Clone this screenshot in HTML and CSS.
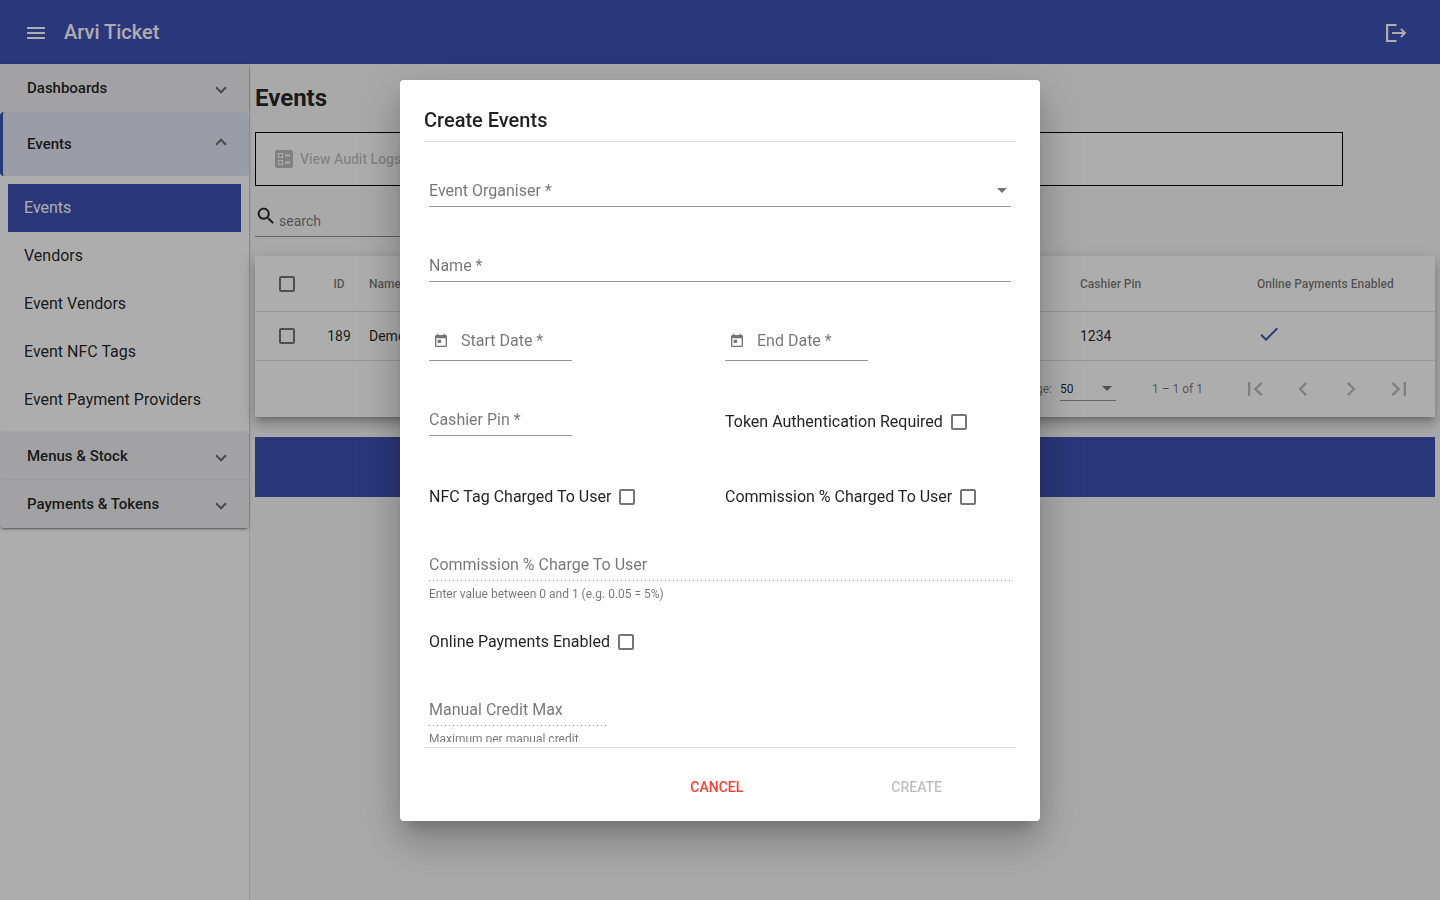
FILE: index.html
```
<!DOCTYPE html>
<html lang="en">
<head>
    <meta charset="UTF-8">
    <meta name="viewport" content="width=device-width, initial-scale=1">
    <title>Arvi Ticket</title>
    <link rel="stylesheet" href="styles.css">
</head>
<body>
    <header class="toolbar">
        <button class="icon-btn" aria-label="Menu">
            <svg viewBox="0 0 24 24"><path d="M3 18h18v-2H3v2zm0-5h18v-2H3v2zm0-7v2h18V6H3z"/></svg>
        </button>
        <span class="toolbar-title">Arvi Ticket</span>
        <button class="icon-btn" aria-label="Log out">
            <svg viewBox="0 0 24 24"><path d="M12.500 3v2H4.200v14h8.300v2H2V3zM17.600 7.200L22.400 12l-4.800 4.800-1.400-1.400L18.600 13H8v-2h10.600l-2.400-2.400z"/></svg>
        </button>
    </header>

    <div class="layout">
        <nav class="sidenav">
            <div class="accordion">
                <button class="panel-header">Dashboards</button>
                <button class="panel-header expanded">Events</button>
                <div class="panel-body">
                    <a href="#" class="nav-item active">Events</a>
                    <a href="#" class="nav-item">Vendors</a>
                    <a href="#" class="nav-item">Event Vendors</a>
                    <a href="#" class="nav-item">Event NFC Tags</a>
                    <a href="#" class="nav-item">Event Payment Providers</a>
                </div>
                <button class="panel-header">Menus &amp; Stock</button>
                <button class="panel-header">Payments &amp; Tokens</button>
            </div>
        </nav>

        <main class="content">
            <h1>Events</h1>
            <div class="action-bar">
                <button class="audit-btn" disabled>
                    <svg viewBox="0 0 24 24"><path d="M13 9.500h5v-2h-5v2zm0 7h5v-2h-5v2zm6 4.500H5c-1.100 0-2-.9-2-2V5c0-1.100.9-2 2-2h14c1.100 0 2 .9 2 2v14c0 1.100-.9 2-2 2zM6 11h5V6H6v5zm1-4h3v3H7V7zM6 18h5v-5H6v5zm1-4h3v3H7v-3z"/></svg>
                    View Audit Logs
                </button>
            </div>
            <div class="search">
                <svg viewBox="0 0 24 24"><path d="M15.500 14h-.79l-.28-.27C15.410 12.590 16 11.110 16 9.500 16 5.910 13.090 3 9.500 3S3 5.910 3 9.500 5.910 16 9.500 16c1.610 0 3.090-.59 4.230-1.570l.27.28v.79l5 4.990L20.490 19l-4.990-5zm-6 0C7.010 14 5 11.990 5 9.500S7.010 5 9.500 5 14 7.010 14 9.500 11.990 14 9.500 14z"/></svg>
                <input type="text" placeholder="search" aria-label="search">
            </div>

            <div class="table-card">
                <table>
                    <thead>
                        <tr>
                            <th class="col-check"><input type="checkbox" aria-label="Select all"></th>
                            <th class="col-id">ID</th>
                            <th>Name</th>
                            <th class="col-pin">Cashier Pin</th>
                            <th class="col-online">Online Payments Enabled</th>
                        </tr>
                    </thead>
                    <tbody>
                        <tr>
                            <td class="col-check"><input type="checkbox" aria-label="Select 189"></td>
                            <td class="col-id">189</td>
                            <td>Demo</td>
                            <td>1234</td>
                            <td><svg class="tick" viewBox="0 0 24 24"><path d="M9 16.170L4.830 12l-1.420 1.410L9 19 21 7l-1.410-1.410z"/></svg></td>
                        </tr>
                    </tbody>
                </table>
                <div class="paginator">
                    <label for="page-size">Items per page:</label>
                    <div class="select-wrap page-size">
                        <select id="page-size"><option>50</option></select>
                    </div>
                    <span class="range">1 – 1 of 1</span>
                    <button class="page-btn" aria-label="First page" disabled><svg viewBox="0 0 24 24"><path d="M18.410 16.590L13.820 12l4.590-4.590L17 6l-6 6 6 6zM6 6h2v12H6z"/></svg></button>
                    <button class="page-btn" aria-label="Previous page" disabled><svg viewBox="0 0 24 24"><path d="M15.410 7.410L14 6l-6 6 6 6 1.410-1.410L10.830 12z"/></svg></button>
                    <button class="page-btn" aria-label="Next page" disabled><svg viewBox="0 0 24 24"><path d="M10 6L8.590 7.410 13.170 12l-4.580 4.590L10 18l6-6z"/></svg></button>
                    <button class="page-btn" aria-label="Last page" disabled><svg viewBox="0 0 24 24"><path d="M5.590 7.410L10.180 12l-4.590 4.590L7 18l6-6-6-6zM16 6h2v12h-2z"/></svg></button>
                </div>
            </div>
            <footer class="footer"></footer>
        </main>
    </div>

    <div class="overlay">
        <form class="dialog" role="dialog" aria-labelledby="dialog-title">
            <h2 id="dialog-title">Create Events</h2>
            <div class="dialog-content">
                <div class="row wide">
                    <div class="field select-wrap">
                        <select aria-label="Event Organiser" required><option value="">Event Organiser *</option></select>
                    </div>
                </div>
                <div class="row wide">
                    <div class="field"><input type="text" placeholder="Name *" aria-label="Name"></div>
                </div>
                <div class="row">
                    <div class="field half date">
                        <button type="button" class="date-btn" aria-label="Open calendar"><svg viewBox="0 0 24 24"><path d="M19 3h-1V1h-2v2H8V1H6v2H5c-1.110 0-1.990.9-1.990 2L3 19c0 1.100.89 2 2 2h14c1.100 0 2-.9 2-2V5c0-1.100-.9-2-2-2zm0 16H5V8h14v11zM7 10h5v5H7z"/></svg></button>
                        <input type="text" placeholder="Start Date *" aria-label="Start Date">
                    </div>
                </div>
                <div class="row">
                    <div class="field half date">
                        <button type="button" class="date-btn" aria-label="Open calendar"><svg viewBox="0 0 24 24"><path d="M19 3h-1V1h-2v2H8V1H6v2H5c-1.110 0-1.990.9-1.990 2L3 19c0 1.100.89 2 2 2h14c1.100 0 2-.9 2-2V5c0-1.100-.9-2-2-2zm0 16H5V8h14v11zM7 10h5v5H7z"/></svg></button>
                        <input type="text" placeholder="End Date *" aria-label="End Date">
                    </div>
                </div>
                <div class="row">
                    <div class="field half"><input type="text" placeholder="Cashier Pin *" aria-label="Cashier Pin"></div>
                </div>
                <div class="row check-row">
                    <label class="check">Token Authentication Required <input type="checkbox"></label>
                </div>
                <div class="row check-row">
                    <label class="check">NFC Tag Charged To User <input type="checkbox"></label>
                </div>
                <div class="row check-row">
                    <label class="check">Commission % Charged To User <input type="checkbox"></label>
                </div>
                <div class="row wide with-hint">
                    <div class="field disabled"><input type="text" placeholder="Commission % Charge To User" aria-label="Commission % Charge To User" disabled></div>
                    <div class="hint">Enter value between 0 and 1 (e.g. 0.05 = 5%)</div>
                </div>
                <div class="row wide check-row">
                    <label class="check">Online Payments Enabled <input type="checkbox"></label>
                </div>
                <div class="row wide with-hint">
                    <div class="field disabled fixed"><input type="text" placeholder="Manual Credit Max" aria-label="Manual Credit Max" disabled></div>
                    <div class="hint">Maximum per manual credit.</div>
                </div>
            </div>
            <div class="dialog-actions">
                <button type="button" class="cancel">CANCEL</button>
                <button type="submit" disabled>CREATE</button>
            </div>
        </form>
    </div>
</body>
</html>
```
FILE: styles.css
```
* {
    box-sizing: border-box;
}
html, body {
    height: 100%;
    margin: 0;
}
body {
    display: flex;
    flex-direction: column;
    overflow: hidden;
    font-family: Roboto, "Liberation Sans", sans-serif;
    font-size: 14px;
    color: rgba(0, 0, 0, 0.87);
    background: #fafafa;
}
button, input, select {
    font: inherit;
    color: inherit;
    background: none;
    border: 0;
    border-radius: 0;
    padding: 0;
    margin: 0;
    outline: 0;
}
button {
    cursor: pointer;
}
svg {
    display: block;
    fill: currentColor;
}
input::placeholder {
    color: rgba(0, 0, 0, 0.54);
    opacity: 1;
}
input[type="checkbox"] {
    appearance: none;
    display: block;
    flex: none;
    width: 16px;
    height: 16px;
    border: 2px solid rgba(0, 0, 0, 0.54);
    border-radius: 2px;
}
input[type="checkbox"]:checked {
    background: #3f51b5;
    border-color: #3f51b5;
}

/* toolbar */
.toolbar {
    display: flex;
    align-items: center;
    gap: 16px;
    flex: none;
    height: 64px;
    padding: 0 32px 0 24px;
    background: #3f51b5;
    color: #fff;
}
.toolbar-title {
    flex: 1;
    font-size: 20px;
    font-weight: 500;
}
.icon-btn {
    padding-top: 2px;
}
.icon-btn svg {
    width: 24px;
    height: 24px;
}

/* side navigation */
.layout {
    display: flex;
    flex: 1;
    min-height: 0;
}
.sidenav {
    flex: none;
    width: 250px;
    background: #fff;
    border-right: 1px solid rgba(0, 0, 0, 0.12);
}
.accordion {
    border-radius: 4px;
    box-shadow: 0 3px 1px -2px rgba(0, 0, 0, 0.2), 0 2px 2px 0 rgba(0, 0, 0, 0.14), 0 1px 5px 0 rgba(0, 0, 0, 0.12);
}
.panel-header {
    display: flex;
    align-items: center;
    justify-content: space-between;
    width: 100%;
    height: 48px;
    padding: 0 24px;
    border-left: 3px solid transparent;
    border-radius: 4px;
    background: #efeff2;
    box-shadow: 0 0 2px rgba(0, 0, 0, 0.2);
    font-size: 15px;
    font-weight: 500;
}
.panel-header::after {
    content: "";
    width: 6px;
    height: 6px;
    border: solid rgba(0, 0, 0, 0.54);
    border-width: 0 2px 2px 0;
    transform: rotate(45deg);
}
.panel-header.expanded {
    height: 64px;
    background: #e4e8f4;
    border-left-color: #3f51b5;
    box-shadow: none;
}
.panel-header.expanded::after {
    transform: rotate(225deg);
}
.panel-body {
    padding: 8px;
}
.nav-item {
    display: block;
    padding: 0 16px;
    font-size: 16px;
    line-height: 48px;
    color: inherit;
    text-decoration: none;
}
.nav-item.active {
    background: #3f51b5;
    color: #fff;
}

/* events page */
.content {
    flex: 1;
    min-width: 0;
    padding: 20px 5px;
}
h1 {
    margin: 0 0 20px;
    font-size: 24px;
    line-height: 28px;
    font-weight: 700;
}
.action-bar {
    margin-right: 92px;
    padding: 0 16px;
    border: 1px solid #000;
    background: #fff;
}
.audit-btn {
    display: flex;
    align-items: center;
    gap: 4px;
    height: 52px;
    font-weight: 500;
    color: rgba(0, 0, 0, 0.26);
}
.audit-btn svg {
    width: 24px;
    height: 24px;
}
.search {
    display: flex;
    width: 240px;
    height: 32px;
    margin: 19px 0;
    gap: 2px;
    border-bottom: 1px solid rgba(0, 0, 0, 0.42);
}
.search svg {
    width: 22px;
    height: 22px;
}
.search input {
    flex: 1;
    min-width: 0;
}
.table-card {
    background: #fff;
    box-shadow: 0 5px 5px -3px rgba(0, 0, 0, 0.2), 0 8px 10px 1px rgba(0, 0, 0, 0.14), 0 3px 14px 2px rgba(0, 0, 0, 0.12);
}
table {
    width: 100%;
    table-layout: fixed;
    border-collapse: separate;
    border-spacing: 0;
}
th, td {
    padding: 0;
    text-align: left;
    border-bottom: 1px solid rgba(0, 0, 0, 0.12);
}
th {
    height: 56px;
    font-size: 12px;
    font-weight: 500;
    color: rgba(0, 0, 0, 0.54);
}
td {
    height: 49px;
}
.col-check {
    width: 54px;
    padding-left: 24px;
}
th.col-id, td.col-id {
    width: 60px;
    text-align: center;
}
.col-pin {
    width: 177px;
}
.col-online {
    width: 178px;
}
.tick {
    width: 24px;
    height: 24px;
    margin-bottom: 4px;
    color: #3f51b5;
}
.paginator {
    display: flex;
    align-items: center;
    justify-content: flex-end;
    height: 56px;
    padding-right: 12px;
    font-size: 12px;
    color: rgba(0, 0, 0, 0.54);
}
.select-wrap {
    display: flex;
    align-items: center;
}
.select-wrap select {
    appearance: none;
    flex: 1;
    min-width: 0;
}
.select-wrap::after {
    content: "";
    margin: 0 4px;
    border: 5px solid transparent;
    border-top-color: rgba(0, 0, 0, 0.54);
    border-bottom: 0;
}
.page-size {
    width: 56px;
    height: 24px;
    margin: 0 36px 0 8px;
    border-bottom: 1px solid rgba(0, 0, 0, 0.42);
    color: rgba(0, 0, 0, 0.87);
}
.range {
    margin-right: 28px;
}
.page-btn {
    width: 48px;
    padding: 0 10px;
    color: rgba(0, 0, 0, 0.26);
}
.page-btn svg {
    width: 28px;
    height: 28px;
}
.footer {
    height: 60px;
    margin-top: 20px;
    background: #3f51b5;
}

/* create dialog */
.overlay {
    position: fixed;
    inset: 0;
    display: flex;
    align-items: flex-start;
    justify-content: center;
    padding-top: 80px;
    background: rgba(0, 0, 0, 0.32);
}
.dialog {
    width: 640px;
    max-width: 80vw;
    padding: 24px 24px 0;
    background: #fff;
    border-radius: 4px;
    box-shadow: 0 11px 15px -7px rgba(0, 0, 0, 0.2), 0 24px 38px 3px rgba(0, 0, 0, 0.14), 0 9px 46px 8px rgba(0, 0, 0, 0.12);
}
.dialog h2 {
    margin: 0;
    padding-bottom: 5px;
    border-bottom: 1px solid rgba(0, 0, 0, 0.12);
    font-size: 20px;
    line-height: 32px;
    font-weight: 500;
}
.dialog-content {
    display: grid;
    grid-template-columns: 1fr 1fr;
    max-height: calc(100vh - 300px);
    padding-top: 16px;
    overflow-y: auto;
    scrollbar-width: none;
    font-size: 16px;
}
.row {
    padding: 23px 5px 26px;
}
.row.wide {
    grid-column: span 2;
}
.row.check-row {
    height: 70px;
    padding-bottom: 0;
}
.row.with-hint {
    padding-bottom: 6px;
}
.field {
    height: 26px;
    padding-bottom: 7px;
    border-bottom: 1px solid rgba(0, 0, 0, 0.42);
}
.field input {
    display: block;
    width: 100%;
    height: 18px;
}
.field select {
    height: 18px;
    color: rgba(0, 0, 0, 0.54);
}
.field.half {
    width: 50%;
}
.field.fixed {
    width: 180px;
}
.field.disabled {
    border-bottom: 0;
    background: linear-gradient(to right, rgba(0, 0, 0, 0.42) 0, rgba(0, 0, 0, 0.42) 33%, transparent 0) 0 100% / 4px 1px repeat-x;
}
.field.date {
    display: flex;
    gap: 8px;
    height: 30px;
    padding-bottom: 11px;
}
.date-btn {
    flex: none;
    width: 24px;
    padding: 2px 4px 0;
    color: rgba(0, 0, 0, 0.54);
}
.date-btn svg {
    width: 16px;
    height: 16px;
}
.field.date input {
    flex: 1;
    min-width: 0;
}
.hint {
    margin-top: 6px;
    font-size: 12px;
    line-height: 14px;
    color: rgba(0, 0, 0, 0.54);
}
.check {
    display: inline-flex;
    align-items: center;
    gap: 8px;
    line-height: 24px;
}
.dialog-actions {
    display: flex;
    justify-content: flex-end;
    gap: 116px;
    margin-top: 5px;
    padding: 21px 58px 16px 0;
    border-top: 1px solid rgba(0, 0, 0, 0.12);
}
.dialog-actions button {
    padding: 0 16px;
    font-weight: 500;
    line-height: 36px;
}
.dialog-actions button:disabled {
    color: rgba(0, 0, 0, 0.26);
}
.dialog-actions .cancel {
    color: #f44336;
}
```
